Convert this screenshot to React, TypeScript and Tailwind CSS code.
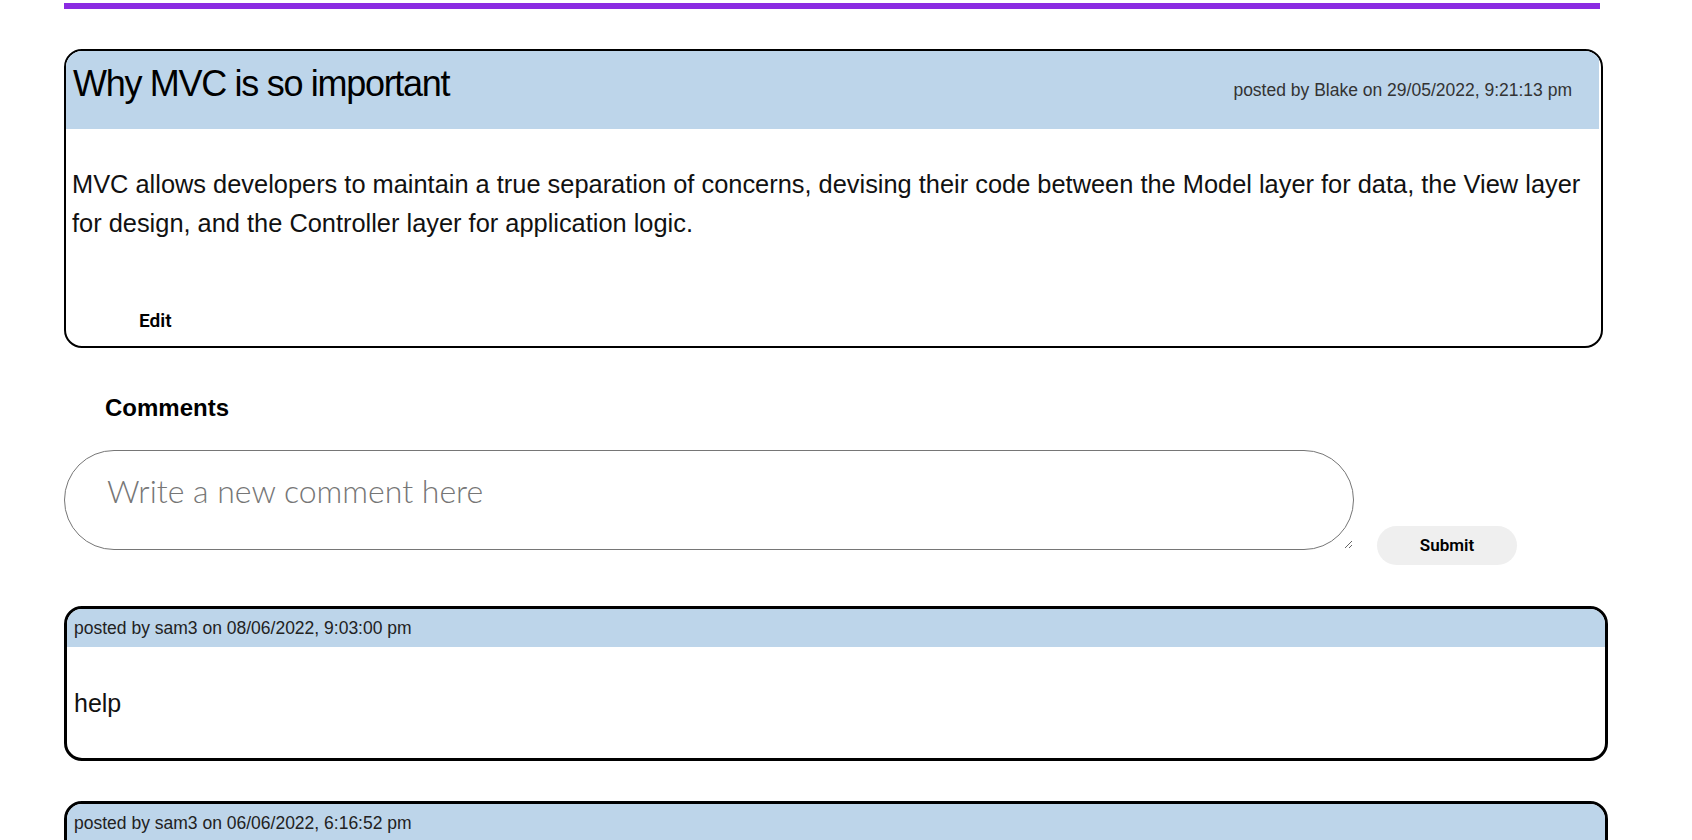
import React from "react";

// Arial-width sans stands in for the original condensed face
const narrow = "font-['Liberation_Sans',Arial,sans-serif]";

type Comment = {
  author: string;
  date: string;
  body: string;
};

const comments: Comment[] = [
  { author: "sam3", date: "08/06/2022, 9:03:00 pm", body: "help" },
  { author: "sam3", date: "06/06/2022, 6:16:52 pm", body: "test comment" },
];

const CommentCard: React.FC<{ comment: Comment }> = ({ comment }) => (
  <div className="mb-[40px] w-[1544px] overflow-hidden rounded-[18px] border-[3px] border-black bg-white">
    <div className={`flex h-[38px] items-center bg-[#bdd5ea] pl-[7px] text-[17.5px] text-[#222] ${narrow}`}>
      posted by {comment.author} on {comment.date}
    </div>
    <div className={`h-[111px] pl-[7px] pt-[37px] text-[25px] leading-[39px] text-[#111] ${narrow}`}>
      {comment.body}
    </div>
  </div>
);

const App: React.FC = () => {
  return (
    <div className="min-h-screen bg-white pl-[64px] pt-[3px]">
      <div className="h-[6px] w-[1536px] bg-[#8a2be2]" />

      {/* post */}
      <div className="mt-[40px] w-[1539px] overflow-hidden rounded-[18px] border-2 border-black bg-white">
        <div className="mr-[2px] flex h-[78px] items-baseline justify-between bg-[#bdd5ea] pl-[7px] pr-[27px] pt-[15px]">
          <h1 className={`text-[36px] leading-none tracking-[-1.3px] text-black ${narrow}`}>Why MVC is so important</h1>
          <span className={`text-[17.5px] text-[#333] ${narrow}`}>posted by Blake on 29/05/2022, 9:21:13 pm</span>
        </div>
        <p className={`pl-[6px] pr-[4px] pt-[36px] text-[25.4px] leading-[39px] text-[#111] ${narrow}`}>
          MVC allows developers to maintain a true separation of concerns, devising their code between the Model
          layer for data, the View layer for design, and the Controller layer for application logic.
        </p>
        <div className="mt-[68px] flex pb-[15px] pl-[73px]">
          <button className="font-['Roboto',sans-serif] text-[19px] font-semibold leading-[20px] text-black">Edit</button>
        </div>
      </div>

      {/* comments */}
      <h3 className={`mt-[48px] pl-[41px] text-[24px] font-bold leading-none text-black ${narrow}`}>Comments</h3>

      <div className="mt-[30px] flex items-start">
        <textarea
          placeholder="Write a new comment here"
          className="h-[100px] w-[1290px] rounded-[50px] border border-[#767676] px-[42px] pt-[16px] font-['Lato',sans-serif] text-[32px] font-light outline-none placeholder:text-[#767676]"
        />
        <button className="ml-[23px] mt-[76px] h-[39px] w-[140px] rounded-full bg-[#efefef] font-['Roboto',sans-serif] text-[17px] font-semibold text-black">
          Submit
        </button>
      </div>

      <div className="mt-[41px]">
        {comments.map((c, i) => (
          <CommentCard key={i} comment={c} />
        ))}
      </div>
    </div>
  );
};

export default App;
